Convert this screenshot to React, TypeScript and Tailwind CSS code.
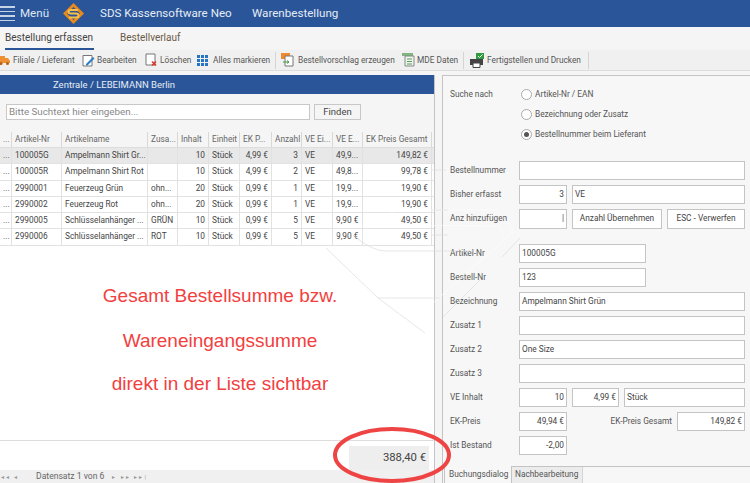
import React from "react";

const gridCols = "grid grid-cols-[12px_50px_86px_30px_31px_31px_32px_30px_31px_30px_69px]";

const rows = [
  ["...", "100005G", "Ampelmann Shirt Gr...", "", "10", "Stück", "4,99 €", "3", "VE", "49,9...", "149,82 €"],
  ["...", "100005R", "Ampelmann Shirt Rot", "", "10", "Stück", "4,99 €", "2", "VE", "49,8...", "99,78 €"],
  ["...", "2990001", "Feuerzeug Grün", "ohn...", "20", "Stück", "0,99 €", "1", "VE", "19,9...", "19,90 €"],
  ["...", "2990002", "Feuerzeug Rot", "ohn...", "20", "Stück", "0,99 €", "1", "VE", "19,9...", "19,90 €"],
  ["...", "2990005", "Schlüsselanhänger ...", "GRÜN", "10", "Stück", "0,99 €", "5", "VE", "9,90 €", "49,50 €"],
  ["...", "2990006", "Schlüsselanhänger ...", "ROT", "10", "Stück", "0,99 €", "5", "VE", "9,90 €", "49,50 €"],
];

const heads = ["...", "Artikel-Nr", "Artikelname", "Zusa...", "Inhalt", "Einheit", "EK P...", "Anzahl", "VE Ei...", "VE E...", "EK Preis Gesamt"];

const rightAligned = [4, 6, 7, 10];

function Box({ w, text, right, tall }: { w: string; text?: string; right?: boolean; tall?: boolean }) {
  return (
    <div className={`${w} ${tall ? "h-[20px] leading-[17px]" : "h-[19px] leading-[16px]"} shrink-0 border border-[#c4c4c4] bg-white px-[2px] text-[#444] ${right ? "text-right" : ""}`}>
      {text}
    </div>
  );
}

function Field({ label, children, gap }: { label: string; children: React.ReactNode; gap?: string }) {
  return (
    <div className={`flex h-[19px] items-center ${gap ?? "mb-[5px]"}`}>
      <div className="w-[69px] shrink-0 text-[#555]">{label}</div>
      <div className="flex flex-1 items-center gap-[5px]">{children}</div>
    </div>
  );
}

function Radio({ label, on }: { label: string; on?: boolean }) {
  return (
    <div className="flex h-[20px] items-center gap-[3px]">
      <div className="flex h-[11px] w-[11px] items-center justify-center rounded-full border border-[#aaa] bg-white">
        {on && <div className="h-[5px] w-[5px] rounded-full bg-[#555]" />}
      </div>
      <span className="text-[#555]">{label}</span>
    </div>
  );
}

function ToolItem({ icon, label, cls }: { icon: React.ReactNode; label: string; cls: string }) {
  return (
    <div className={`flex items-center whitespace-nowrap ${cls}`}>
      {icon}
      <span className="text-[#555]">{label}</span>
    </div>
  );
}

export default function App() {
  return (
    <div className="relative flex h-[483px] w-[750px] flex-col overflow-hidden bg-[#f5f5f5] font-['Roboto','Liberation_Sans',sans-serif] text-[8.300px]">
      {/* HEADER */}
      <div className="flex h-[27px] shrink-0 items-center bg-[#2a5699] text-[11.600px] text-white">
        <div className="flex w-[15px] flex-col gap-[3px]">
          <div className="h-[1.5px] bg-[#c6d3e6]" />
          <div className="h-[1.5px] bg-[#c6d3e6]" />
          <div className="h-[1.5px] bg-[#c6d3e6]" />
          <div className="h-[1.5px] bg-[#c6d3e6]" />
        </div>
        <span className="ml-[5px] w-[42px] text-[#dfe7f3]">Menü</span>
        <svg width="23" height="23" viewBox="0 0 23 23" className="shrink-0">
          <path d="M11.5 1 L22 11.5 L11.5 22 L1 11.5 Z" fill="#e8891c" />
          <path d="M11.5 5 L18 11.5 L11.5 18 L5 11.5 Z" fill="#2a5699" />
          <path d="M16 8 H9 Q6.500 8 6.500 10 Q6.500 11.500 9 11.500 H14 Q16.500 11.500 16.500 13.500 Q16.500 15.500 14 15.500 H7" fill="none" stroke="#f7c04a" strokeWidth="2" />
        </svg>
        <span className="ml-[15px] w-[152px] text-[#e6ecf5]">SDS Kassensoftware Neo</span>
        <span className="text-[#e6ecf5]">Warenbestellung</span>
      </div>

      {/* TABS */}
      <div className="flex h-[23px] shrink-0 items-start pl-[5px] pt-[3px] text-[10px]">
        <div className="w-[115px]">
          <div className="inline-block h-[20px] border-b-2 border-[#2a5699] pr-[1px] leading-[15px] text-[#444]">Bestellung erfassen</div>
        </div>
        <span className="leading-[15px] text-[#6a5a48]">Bestellverlauf</span>
      </div>

      {/* TOOLBAR */}
      <div className="flex h-[21px] shrink-0 items-center border-b border-[#dcdcdc] bg-[#f0f0f0]">
        <ToolItem
          cls="-ml-[2px] w-[84px]"
          label="Filiale / Lieferant"
          icon={
            <svg width="15" height="12" viewBox="0 0 15 12" className="shrink-0">
              <path d="M0 2H7V9H0Z M7 4H10L12 7V9H7Z" fill="#ef8f33" />
              <circle cx="3" cy="9.500" r="1.500" fill="#b65f16" />
              <circle cx="9.500" cy="9.500" r="1.500" fill="#b65f16" />
            </svg>
          }
        />
        <ToolItem
          cls="w-[63px]"
          label="Bearbeiten"
          icon={
            <svg width="15" height="13" viewBox="0 0 15 13" className="shrink-0">
              <path d="M1 1.500H10V12H1Z" fill="#fff" stroke="#777" />
              <path d="M4 10L11 3L12.500 4.500L5.500 11.500L4 11.500Z" fill="#2f7fc6" />
            </svg>
          }
        />
        <ToolItem
          cls="w-[52px]"
          label="Löschen"
          icon={
            <svg width="15" height="14" viewBox="0 0 15 14" className="shrink-0">
              <path d="M1 1H10V12H1Z" fill="#fff" stroke="#777" />
              <path d="M7 8.500L11 12.500M11 8.500L7 12.500" stroke="#d83a2a" strokeWidth="1.600" />
            </svg>
          }
        />
        <ToolItem
          cls="w-[78px]"
          label="Alles markieren"
          icon={
            <svg width="16" height="11" viewBox="0 0 16 11" className="shrink-0">
              <path d="M0 0H3V3H0ZM4 0H7V3H4ZM8 0H11V3H8ZM0 4H3V7H0ZM4 4H7V7H4ZM8 4H11V7H8ZM0 8H3V11H0ZM4 8H7V11H4ZM8 8H11V11H8Z" fill="#2773c4" />
            </svg>
          }
        />
        <div className="h-[17px] w-px bg-[#d4d4d4]" />
        <ToolItem
          cls="ml-[5px] w-[121px]"
          label="Bestellvorschlag erzeugen"
          icon={
            <svg width="17" height="14" viewBox="0 0 17 14" className="shrink-0">
              <path d="M0 0H9V6H0Z" fill="#f08a2c" />
              <path d="M4 3H12V13H4Z" fill="#fff" stroke="#777" />
              <path d="M2 9H8M6 7.500L8 9L6 10.500" stroke="#3f9a3f" fill="none" />
            </svg>
          }
        />
        <ToolItem
          cls="w-[61px]"
          label="MDE Daten"
          icon={
            <svg width="15" height="14" viewBox="0 0 15 14" className="shrink-0">
              <path d="M0 0H11V3H0Z" fill="#7fb67f" />
              <path d="M3 3H12V13H3Z" fill="#eef3ee" stroke="#888" />
              <path d="M5 6H10M5 8.500H10M5 11H10" stroke="#5d9c5d" />
            </svg>
          }
        />
        <div className="h-[17px] w-px bg-[#d4d4d4]" />
        <ToolItem
          cls="ml-[6px] w-[118px]"
          label="Fertigstellen und Drucken"
          icon={
            <svg width="17" height="15" viewBox="0 0 17 15" className="shrink-0">
              <path d="M0 6H13V12H0Z" fill="#444" />
              <path d="M3 10H10V14.500H3Z" fill="#fff" stroke="#444" />
              <path d="M6 0H14V6H6Z" fill="#2f9a3f" />
              <path d="M8 3L9.500 4.500L12.500 1.500" stroke="#fff" fill="none" />
            </svg>
          }
        />
        <div className="h-[17px] w-px bg-[#d4d4d4]" />
      </div>

      {/* BODY */}
      <div className="flex min-h-0 flex-1 pt-[4px]">
        {/* LEFT PANEL */}
        <div className="flex w-[435px] shrink-0 flex-col border-r border-[#c4c4c4] bg-white">
          <div className="h-[19px] shrink-0 bg-[#2a5699] pl-[53px] text-[9.500px] leading-[19px] text-[#e6ecf5]">Zentrale / LEBEIMANN Berlin</div>
          <div className="flex h-[38px] shrink-0 items-start gap-[4px] bg-[#f5f5f5] pl-[6px] pt-[10px]">
            <div className="h-[16px] w-[304px] border border-[#c8c8c8] bg-white pl-[2px] text-[9.800px] leading-[14px] text-[#888]">Bitte Suchtext hier eingeben...</div>
            <div className="h-[16px] w-[47px] border border-[#c8c8c8] bg-[#f5f5f5] text-center text-[9.500px] leading-[14px] text-[#444]">Finden</div>
          </div>
          <div className={`${gridCols} h-[16px] shrink-0 border-b border-[#ddd] bg-[#f5f5f5] text-[#666]`}>
            {heads.map((h, i) => (
              <div key={i} className={`overflow-hidden whitespace-nowrap border-r border-[#d8d8d8] pl-[3px] leading-[14px] ${i === 7 ? "pr-[2px] text-right" : ""}`}>
                {h}
              </div>
            ))}
          </div>
          <div className="shrink-0">
            {rows.map((r, idx) => (
              <div key={idx} className={`${gridCols} h-[16.3px] border-b border-[#e2e2e2] ${idx === 0 ? "bg-[#e8e8e8]" : "bg-white"} text-[#444]`}>
                {r.map((c, i) => (
                  <div key={i} className={`overflow-hidden whitespace-nowrap border-r border-[#e2e2e2] px-[3px] leading-[15px] ${rightAligned.includes(i) ? "text-right" : ""}`}>
                    {c}
                  </div>
                ))}
              </div>
            ))}
          </div>
          <div className="min-h-0 flex-1" />
          <div className="flex h-[30px] shrink-0 items-end justify-end border-t border-[#ddd] pr-[5px]">
            <div className="h-[24px] w-[80px] bg-[#eeeeee] pr-[3px] text-right text-[11.300px] leading-[24px] text-[#444]">388,40 €</div>
          </div>
          <div className="flex h-[13px] shrink-0 items-center bg-[#f0f0f0] text-[8.600px] text-[#666]">
            <span className="w-[36px] pl-[1px] text-[6px] tracking-[2px] text-[#999]">◂◂ ◂</span>
            <span>Datensatz 1 von 6</span>
            <span className="ml-[8px] w-[98px] text-[6px] tracking-[2px] text-[#999]">▸ ▸▸ ▸▸|</span>
          </div>
        </div>

        {/* RIGHT PANEL */}
        <div className="ml-[7px] flex min-w-0 flex-1 flex-col border-l border-t border-[#c4c4c4] bg-[#f7f7f7]">
          <div className="flex-1 pl-[7px] pr-[5px] pt-[8px]">
            <div className="mb-[17px] flex">
              <div className="w-[71px] pt-[4px] text-[#555]">Suche nach</div>
              <div className="flex flex-col">
                <Radio label="Artikel-Nr / EAN" />
                <Radio label="Bezeichnung oder Zusatz" />
                <Radio label="Bestellnummer beim Lieferant" on />
              </div>
            </div>
            <Field label="Bestellnummer"><Box w="flex-1" /></Field>
            <Field label="Bisher erfasst">
              <Box w="w-[48px]" text="3" right />
              <Box w="flex-1" text="VE" />
            </Field>
            <Field label="Anz hinzufügen" gap="mb-[16px]">
              <Box w="w-[48px]" text="|" right tall />
              <Box w="w-[90px] text-center" text="Anzahl Übernehmen" tall />
              <Box w="flex-1 text-center" text="ESC - Verwerfen" tall />
            </Field>
            <Field label="Artikel-Nr"><Box w="w-[127px]" text="100005G" /></Field>
            <Field label="Bestell-Nr"><Box w="w-[127px]" text="123" /></Field>
            <Field label="Bezeichnung"><Box w="flex-1" text="Ampelmann Shirt Grün" /></Field>
            <Field label="Zusatz 1"><Box w="flex-1" /></Field>
            <Field label="Zusatz 2"><Box w="flex-1" text="One Size" /></Field>
            <Field label="Zusatz 3"><Box w="flex-1" /></Field>
            <Field label="VE Inhalt">
              <Box w="w-[48px]" text="10" right />
              <Box w="w-[47px]" text="4,99 €" right />
              <Box w="flex-1" text="Stück" />
            </Field>
            <Field label="EK-Preis">
              <Box w="w-[48px]" text="49,94 €" right />
              <div className="w-[100px] text-right text-[#555]">EK-Preis Gesamt</div>
              <Box w="flex-1" text="149,82 €" right />
            </Field>
            <Field label="Ist Bestand"><Box w="w-[48px]" text="-2,00" right /></Field>
          </div>
          <div className="flex h-[17px] shrink-0 border-t border-[#c4c4c4] pl-[1px] text-[#555]">
            <div className="-mt-px w-[68px] border-x border-[#c4c4c4] bg-[#f7f7f7] pl-[4px] leading-[17px]">Buchungsdialog</div>
            <div className="w-[71px] border-r border-[#d4d4d4] bg-[#ececec] pl-[3px] leading-[15px]">Nachbearbeitung</div>
          </div>
        </div>
      </div>

      {/* WATERMARK + ANNOTATION */}
      <svg width="750" height="483" viewBox="0 0 750 483" className="pointer-events-none absolute left-0 top-0">
        <g fill="none" stroke="#ffffff" strokeWidth="1" opacity="0.6">
          <path d="M385 228 Q386 210 400 210 H497 L514 231 L433 303 H378" />
          <path d="M358 226 Q360 225 500 226 L505 240" />
          <path d="M340 222 L335 240 H420" />
        </g>
        <g fill="none" stroke="#dddddd" strokeWidth="0.700">
          <path d="M326 248 L378 298 L425 333" />
          <path d="M353 235 Q372 251 385 251 H473" />
          <path d="M520 238 L502 257" />
          <path d="M480 280 L443 317" />
          <path d="M378 298 H440" />
          <path d="M432 170 H446 M432 210 H448 M432 235 H448" />
        </g>
      </svg>
      <div className="pointer-events-none absolute left-[53px] top-[285px] w-[334px] text-center font-['Liberation_Sans',sans-serif] text-[19px] leading-[21px] text-[#f24040]">
        <div>Gesamt Bestellsumme bzw.</div>
        <div className="mt-[24px]">Wareneingangssumme</div>
        <div className="mt-[22px]">direkt in der Liste sichtbar</div>
      </div>
      <svg width="750" height="483" viewBox="0 0 750 483" className="pointer-events-none absolute left-0 top-0">
        <ellipse cx="392" cy="455" rx="57" ry="26" fill="none" stroke="#ee4444" strokeWidth="4" />
      </svg>
    </div>
  );
}
